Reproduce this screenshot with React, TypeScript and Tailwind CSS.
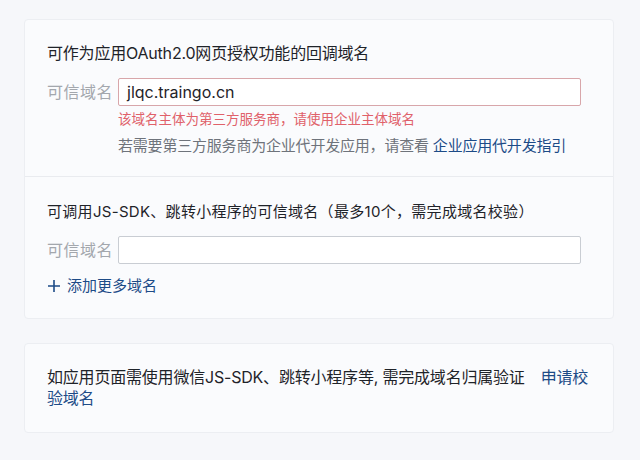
import React from "react";

export default function App() {
  return (
    <div
      className="w-[640px] h-[460px] bg-[#f6f7fa] overflow-hidden pt-[19px] pl-[24px]"
      style={{ fontFamily: 'Inter, "Noto Sans CJK SC", sans-serif' }}
    >
      <div className="w-[590px] rounded-[4px] border border-[#eceef2] bg-[#fafbfd]">
        <div className="pl-[22px] pr-[32px] pt-[22px] pb-[20px] border-b border-[#e9ebef]">
          <div className="text-[16px] leading-[22px] text-[#1f2329] tracking-[-0.2px]">
            可作为应用OAuth2.0网页授权功能的回调域名
          </div>
          <div className="mt-[14px] flex items-center">
            <div className="w-[71px] text-[16px] leading-[22px] text-[#a3a7ad] tracking-[0.5px]">可信域名</div>
            <div className="flex-1 h-[28px] rounded-[2px] border border-[#d8a6aa] bg-white flex items-center pl-[8px] text-[16px] text-[#1f2329]">
              jlqc.traingo.cn
            </div>
          </div>
          <div className="pl-[71px]">
            <div className="mt-[3px] text-[13.5px] leading-[20px] text-[#e0616a]">
              该域名主体为第三方服务商，请使用企业主体域名
            </div>
            <div className="mt-[7px] text-[15px] leading-[20px] text-[#6e737b] tracking-[-0.2px]">
              若需要第三方服务商为企业代开发应用，请查看 <span className="text-[#1d4b87]">企业应用代开发指引</span>
            </div>
          </div>
        </div>
        <div className="pl-[22px] pr-[32px] pt-[24px] pb-[22px]">
          <div className="text-[15px] leading-[22px] text-[#1f2329] tracking-[0.3px]">
            可调用JS-SDK、跳转小程序的可信域名（最多10个，需完成域名校验）
          </div>
          <div className="mt-[13px] flex items-center">
            <div className="w-[71px] text-[16px] leading-[22px] text-[#a3a7ad] tracking-[0.5px]">可信域名</div>
            <div className="flex-1 h-[28px] rounded-[2px] border border-[#c9cdd3] bg-white" />
          </div>
          <div className="mt-[12px] flex items-center text-[15px] leading-[20px] text-[#1d4b87]">
            <svg width="14" height="14" viewBox="0 0 14 14" className="mr-[6px]">
              <path d="M7 1v12M1 7h12" stroke="#1d4b87" strokeWidth="1.6" />
            </svg>
            添加更多域名
          </div>
        </div>
      </div>
      <div className="mt-[24px] w-[590px] rounded-[4px] border border-[#eceef2] bg-[#fafbfd] pl-[22px] pr-[20px] pt-[23px] pb-[23px]">
        <div className="text-[16px] leading-[21px] text-[#1f2329] tracking-[-0.2px]">
          如应用页面需使用微信JS-SDK、跳转小程序等, 需完成域名归属验证
          <span className="ml-[16px] text-[#1d4b87]">申请校验域名</span>
        </div>
      </div>
    </div>
  );
}
